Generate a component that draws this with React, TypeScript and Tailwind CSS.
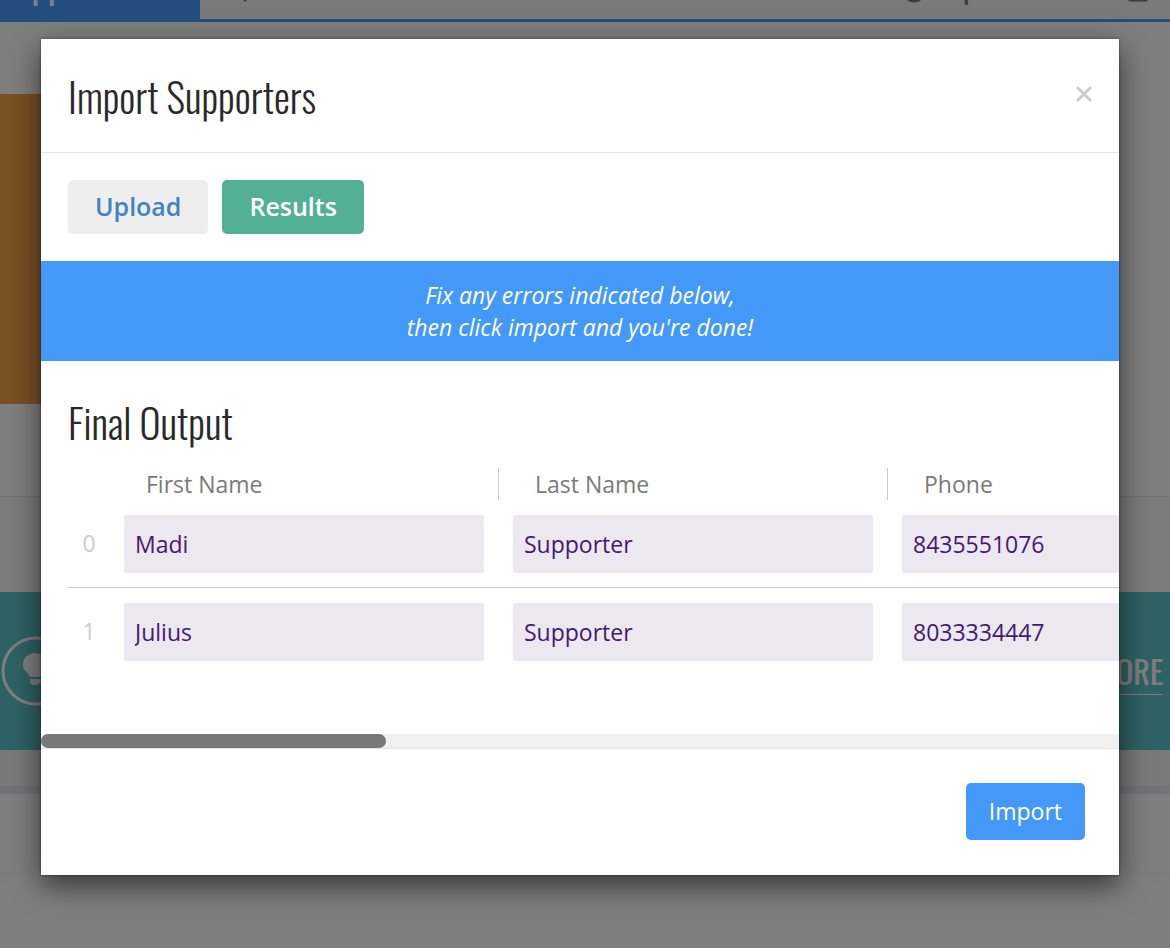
import { useState } from "react"
import type { UIEvent } from "react"
import { CircleHelp, Search, Square } from "lucide-react"

const columns = ["First Name", "Last Name", "Phone"]

const supporters = [
  ["Madi", "Supporter", "8435551076"],
  ["Julius", "Supporter", "8033334447"],
]

const display = "font-['Oswald',sans-serif]"

function Backdrop() {
  return (
    <div className="min-h-screen bg-white" aria-hidden="true">
      <header className="flex h-[22px] items-end overflow-hidden border-b-[3px] border-[#469cfc] bg-[#f4f4f4] text-[#777]">
        <div className="-mb-[3px] flex h-[22px] w-[200px] shrink-0 items-end bg-[#469cfc] pb-4 text-[26px] text-white">
          <span className="leading-8 font-bold">Supporters</span>
        </div>
        <div className="flex grow items-end justify-between pr-5 pb-2.5 pl-6 text-xl font-bold">
          <Search className="mb-1.5 size-6" strokeWidth={3} />
          <div className="flex items-end gap-1">
            <CircleHelp className="mb-1.5 size-6" strokeWidth={3} />
            <span className="leading-8">Help</span>
            <Square className="mb-1.5 ml-[146px] size-6" strokeWidth={3} />
          </div>
        </div>
      </header>
      <div className="h-[72px]" />
      <div className="h-[310px] w-1/2 bg-[#f4a048]" />
      <div className="h-[93px] border-b border-[#e4e4e4]" />
      <div className="h-[95px] bg-[#f8f8f8]" />
      <div className="flex h-[158px] items-center justify-between bg-[#5ec4c8] pr-[7px] pl-px text-white">
        <svg viewBox="0 0 70 70" className="size-[70px]" fill="none">
          <circle cx="35" cy="35" r="33" stroke="currentColor" strokeWidth="3" />
          <path
            fill="currentColor"
            d="M34 17c-7 0-12 5-12 12 0 6 6 8 7 12h11c0-4 6-6 6-12 0-7-5-12-12-12zM29 43h11v1c0 3-2 5-6 5s-5-2-5-5z"
          />
        </svg>
        <span className={`border-b border-white text-[32px] leading-[46px] ${display}`}>LEARN MORE</span>
      </div>
      <div className="h-9 bg-[#f4f4f4]" />
      <div className="h-2 bg-[#e2e8ee]" />
      <div className="h-20 border-b border-[#eee]" />
    </div>
  )
}

function OutputTable({ onScroll }: { onScroll: (e: UIEvent<HTMLDivElement>) => void }) {
  return (
    <div onScroll={onScroll} className="h-[266px] overflow-x-auto pl-[27px] [scrollbar-width:none]">
      <table className="w-[1209px] table-fixed border-separate border-spacing-0">
        <thead>
          <tr>
            <th className="w-[42px]" />
            {columns.map((column) => (
              <th
                key={column}
                scope="col"
                className="h-8 w-[389px] border-r border-[#ccc] pl-9 text-left leading-8 font-normal text-[#7a7a7a]"
              >
                {column}
              </th>
            ))}
          </tr>
        </thead>
        <tbody>
          {supporters.map((row, index) => {
            const line = index < supporters.length - 1 ? "border-b border-[#ccc]" : ""
            return (
              <tr key={index}>
                <td className={`text-center text-[#ccc] ${line}`}>{index}</td>
                {row.map((value, i) => (
                  <td key={columns[i]} className={`pt-[15px] pb-3.5 pl-[14px] ${line}`}>
                    <input
                      type="text"
                      defaultValue={value}
                      aria-label={`${columns[i]}, row ${index}`}
                      className="block h-[58px] w-[360px] rounded-xs bg-[#ebe8ef] px-[11px] text-[#45196e]"
                    />
                  </td>
                ))}
              </tr>
            )
          })}
        </tbody>
      </table>
    </div>
  )
}

export default function App() {
  const [scrolled, setScrolled] = useState(0)

  const handleScroll = (e: UIEvent<HTMLDivElement>) => {
    const { scrollLeft, scrollWidth, clientWidth } = e.currentTarget
    setScrolled(scrollWidth > clientWidth ? scrollLeft / (scrollWidth - clientWidth) : 0)
  }

  return (
    <div className="relative h-screen overflow-hidden font-['Open_Sans','Noto_Sans',sans-serif]">
      <Backdrop />

      {/* Overlay */}
      <div className="absolute inset-0 overflow-y-auto bg-black/50 pt-[39px] pr-[51px] pb-10 pl-[41px]">
        <div
          role="dialog"
          aria-modal="true"
          aria-labelledby="import-title"
          className="bg-white text-[23px] shadow-[0_10px_28px_rgba(0,0,0,0.6),0_0_2px_rgba(0,0,0,0.5)]"
        >
          <header className="flex h-[114px] items-center justify-between border-b border-[#e4e4e4] px-[27px]">
            <h1 id="import-title" className={`text-[40px] font-light text-[#292929] ${display}`}>
              Import Supporters
            </h1>
            <button type="button" aria-label="Close" className="pb-1 text-[#ccc]">
              <svg viewBox="0 0 16 16" className="size-4" fill="none" stroke="currentColor" strokeWidth="3" strokeLinecap="round">
                <path d="M2 2l12 12M14 2L2 14" />
              </svg>
            </button>
          </header>

          {/* Steps */}
          <nav className="flex gap-3.5 p-[27px] text-[25px] font-semibold">
            <button type="button" className="h-[54px] rounded-[5px] bg-[#eee] px-[27px] text-[#4283c4]">
              Upload
            </button>
            <button type="button" className="h-[54px] rounded-[5px] bg-[#54b095] px-[27px] text-white">
              Results
            </button>
          </nav>

          <p className="bg-[#4499f8] py-[18px] text-center leading-8 text-white italic">
            Fix any errors indicated below,
            <br />
            then click import and you're done!
          </p>

          <section>
            <h2 className={`flex h-[107px] items-end px-[27px] pb-4 text-[40px] font-light text-[#292929] ${display}`}>
              Final Output
            </h2>
            <OutputTable onScroll={handleScroll} />
            <div className="h-[15px] border-b border-[#e4e4e4] bg-[#f0f0f0]">
              <div
                className="h-3.5 w-[32%] rounded-full bg-[#787878]"
                style={{ marginLeft: `${scrolled * 68}%` }}
              />
            </div>
          </section>

          <footer className="flex justify-end px-[34px] pt-[34px] pb-[35px]">
            <button type="button" className="h-[57px] rounded-[5px] bg-[#4499f8] px-[23px] text-white">
              Import
            </button>
          </footer>
        </div>
      </div>
    </div>
  )
}
